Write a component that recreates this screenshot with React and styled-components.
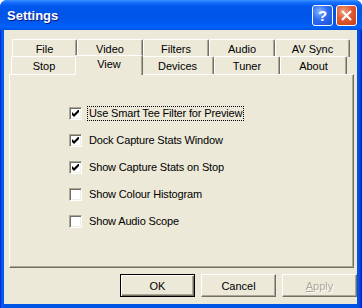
import React from 'react';
import styled, { createGlobalStyle } from 'styled-components';

const GlobalStyle = createGlobalStyle`
  html, body {
    margin: 0;
    padding: 0;
    background: #ffffff;
  }
  * {
    box-sizing: border-box;
  }
`;

const Window = styled.div`
  width: 362px;
  height: 308px;
  display: flex;
  flex-direction: column;
  background: linear-gradient(to right, #0019cf 0, #0847e8 1px, #0a5af0 2px, #0055e5 4px, #0055e5 357px, #0a4ee0 359px, #0033d8 361px, #0019cf 362px);
  border-radius: 7px 7px 0 0;
  overflow: hidden;
  font-family: "Liberation Sans", Arial, sans-serif;
`;

const TitleBar = styled.div`
  height: 30px;
  flex: none;
  display: flex;
  align-items: center;
  padding: 0 5px 0 7px;
  background: linear-gradient(to bottom, #3d95ff 0, #1a73ff 2px, #0058ee 6px, #0054e8 14px, #0058ee 22px, #0062fb 27px, #0052e0 30px);
`;

const Title = styled.div`
  flex: 1;
  color: #ffffff;
  font-weight: bold;
  font-size: 13px;
  text-shadow: 1px 1px 0 #0a1883;
  padding-top: 1px;
`;

const CaptionButton = styled.div`
  width: 21px;
  height: 21px;
  margin-left: 3px;
  border: 1px solid #ffffff;
  border-radius: 3px;
  display: flex;
  align-items: center;
  justify-content: center;
  background: ${p => p.$close
    ? 'radial-gradient(circle at 35% 30%, #f0a080 0, #e05a35 45%, #c83c14 100%)'
    : 'radial-gradient(circle at 35% 30%, #8ab4ff 0, #2c6cf2 45%, #1a4fd8 100%)'};
  color: #ffffff;
  font-weight: bold;
  font-size: 15px;
`;

const Client = styled.div`
  flex: 1;
  margin: 0 5px 4px 4px;
  background: #ece9d8;
  display: flex;
  flex-direction: column;
  padding: 8px 0 7px 5px;
  font-size: 11px;
  color: #000000;
`;

const TabRow = styled.div`
  display: flex;
  height: ${p => p.$h}px;
  padding-left: ${p => p.$indent}px;
  align-items: flex-end;
`;

const Tab = styled.div`
  width: ${p => p.$w}px;
  height: ${p => (p.$active ? 20 : 18)}px;
  margin: ${p => (p.$active ? '0 -2px -1px -2px' : '0')};
  position: relative;
  z-index: ${p => (p.$active ? 2 : 0)};
  background: #ece9d8;
  border-top: 1px solid #ffffff;
  border-left: 1px solid #ffffff;
  border-right: 1px solid #716f64;
  box-shadow: inset -1px 0 0 #aca899;
  border-radius: 2px 2px 0 0;
  display: flex;
  align-items: ${p => (p.$active ? 'flex-start' : 'center')};
  padding-top: ${p => (p.$active ? 2 : 0)}px;
  justify-content: center;
  font-size: 11px;
`;

const Panel = styled.div`
  height: 194px;
  width: 345px;
  border-top: 1px solid #ffffff;
  border-left: 1px solid #ffffff;
  border-right: 1px solid #716f64;
  border-bottom: 1px solid #716f64;
  box-shadow: inset -1px -1px 0 #aca899;
  padding: 32px 0 0 59px;
  display: flex;
  flex-direction: column;
  gap: 14px;
`;

const Option = styled.div`
  display: flex;
  align-items: center;
  height: 13px;
`;

const Box = styled.div`
  width: 13px;
  height: 13px;
  flex: none;
  background: #ffffff;
  border-top: 1px solid #aca899;
  border-left: 1px solid #aca899;
  border-right: 1px solid #ffffff;
  border-bottom: 1px solid #ffffff;
  box-shadow: inset 1px 1px 0 #716f64, inset -1px -1px 0 #f1efe2;
  display: flex;
  align-items: center;
  justify-content: center;
`;

const Label = styled.span`
  margin-left: 5px;
  padding: 0 1px;
  border: 1px solid transparent;
  outline: ${p => (p.$focus ? '1px dotted #000000' : 'none')};
  outline-offset: -1px;
  line-height: 13px;
  letter-spacing: -0.15px;
  white-space: nowrap;
`;

const ButtonRow = styled.div`
  margin-top: 6px;
  display: flex;
  justify-content: flex-end;
  gap: 6px;
  padding-right: 0;
`;

const Button = styled.div`
  width: 75px;
  height: 23px;
  display: flex;
  align-items: center;
  justify-content: center;
  background: #ece9d8;
  border: 1px solid ${p => (p.$default ? '#000000' : '#ffffff')};
  border-right-color: ${p => (p.$default ? '#000000' : '#716f64')};
  border-bottom-color: ${p => (p.$default ? '#000000' : '#716f64')};
  box-shadow: ${p => (p.$default
    ? 'inset 1px 1px 0 #ffffff, inset -1px -1px 0 #716f64, inset -2px -2px 0 #aca899'
    : 'inset -1px -1px 0 #aca899')};
  color: ${p => (p.$disabled ? '#aca899' : '#000000')};
  text-shadow: ${p => (p.$disabled ? '1px 1px 0 #ffffff' : 'none')};
  font-size: 11px;
  padding-top: 1px;
`;

const Check = () => (
  <svg width="7" height="7" viewBox="0 0 7 7">
    <path d="M0 2 L2 4 L7 -1 L7 2 L2 7 L0 5 Z" fill="#000000" />
  </svg>
);

const topTabs = [
  ['File', 65], ['Video', 66], ['Filters', 66], ['Audio', 66], ['AV Sync', 75],
];

const bottomTabs = [
  ['Stop', 66], ['View', 68], ['Devices', 73], ['Tuner', 66], ['About', 67],
];

const options = [
  ['Use Smart Tee Filter for Preview', true],
  ['Dock Capture Stats Window', true],
  ['Show Capture Stats on Stop', true],
  ['Show Colour Histogram', false],
  ['Show Audio Scope', false],
];

export default function App() {
  return (
    <>
      <GlobalStyle />
      <Window>
        <TitleBar>
          <Title>Settings</Title>
          <CaptionButton>?</CaptionButton>
          <CaptionButton $close>
            <svg width="11" height="11" viewBox="0 0 11 11">
              <path d="M1 1 L10 10 M10 1 L1 10" stroke="#ffffff" strokeWidth="2.2" />
            </svg>
          </CaptionButton>
        </TitleBar>
        <Client>
          <TabRow $h={19} $indent={3}>
            {topTabs.map(([t, w]) => (
              <Tab key={t} $w={w}>{t}</Tab>
            ))}
          </TabRow>
          <TabRow $h={17} $indent={2}>
            {bottomTabs.map(([t, w]) => (
              <Tab key={t} $w={w} $active={t === 'View'}>{t}</Tab>
            ))}
          </TabRow>
          <Panel>
            {options.map(([text, on], i) => (
              <Option key={text}>
                <Box>{on && <Check />}</Box>
                <Label $focus={i === 0}>{text}</Label>
              </Option>
            ))}
          </Panel>
          <ButtonRow>
            <Button $default>OK</Button>
            <Button>Cancel</Button>
            <Button $disabled><span><u>A</u>pply</span></Button>
          </ButtonRow>
        </Client>
      </Window>
    </>
  );
}
